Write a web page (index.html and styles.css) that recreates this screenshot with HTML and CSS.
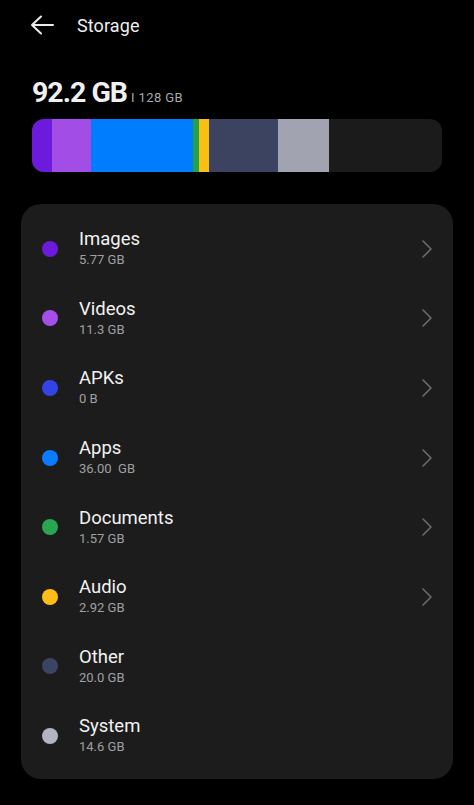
FILE: index.html
```html
<!DOCTYPE html>
<html lang="en">
<head>
<meta charset="utf-8">
<title>Storage</title>
<link rel="stylesheet" href="styles.css">
</head>
<body>
<div class="screen">
  <header class="topbar">
    <svg class="back" width="24" height="20" viewBox="0 0 24 20" aria-hidden="true">
      <path d="M23 10H2M11 1.5L2 10l9 8.5" fill="none" stroke="#ececec" stroke-width="2" stroke-linecap="round" stroke-linejoin="round"/>
    </svg>
    <h1 class="title">Storage</h1>
  </header>

  <div class="summary">
    <span class="used">92.2 GB</span>
    <span class="total">I 128 GB</span>
  </div>

  <div class="bar">
    <span class="seg" style="width:20px;background:#6c1bdc"></span>
    <span class="seg" style="width:39px;background:#a24de6"></span>
    <span class="seg" style="width:102px;background:#007cff"></span>
    <span class="seg" style="width:6px;background:#23a14b"></span>
    <span class="seg" style="width:10px;background:#fbbf14"></span>
    <span class="seg" style="width:69px;background:#3b4360"></span>
    <span class="seg" style="width:51px;background:#a1a4b0"></span>
  </div>

  <div class="card">
    <div class="row">
      <span class="dot" style="background:#6c1bdc"></span>
      <div class="text"><div class="name">Images</div><div class="size">5.77 GB</div></div>
      <svg class="chev" width="12" height="20" viewBox="0 0 12 20"><path d="M2 2l8 8-8 8" fill="none" stroke="#6c6c6c" stroke-width="1.6" stroke-linecap="round" stroke-linejoin="round"/></svg>
    </div>
    <div class="row">
      <span class="dot" style="background:#a54fe8"></span>
      <div class="text"><div class="name">Videos</div><div class="size">11.3 GB</div></div>
      <svg class="chev" width="12" height="20" viewBox="0 0 12 20"><path d="M2 2l8 8-8 8" fill="none" stroke="#6c6c6c" stroke-width="1.6" stroke-linecap="round" stroke-linejoin="round"/></svg>
    </div>
    <div class="row">
      <span class="dot" style="background:#3443e6"></span>
      <div class="text"><div class="name">APKs</div><div class="size">0 B</div></div>
      <svg class="chev" width="12" height="20" viewBox="0 0 12 20"><path d="M2 2l8 8-8 8" fill="none" stroke="#6c6c6c" stroke-width="1.6" stroke-linecap="round" stroke-linejoin="round"/></svg>
    </div>
    <div class="row">
      <span class="dot" style="background:#0a7cff"></span>
      <div class="text"><div class="name">Apps</div><div class="size">36.00&nbsp; GB</div></div>
      <svg class="chev" width="12" height="20" viewBox="0 0 12 20"><path d="M2 2l8 8-8 8" fill="none" stroke="#6c6c6c" stroke-width="1.6" stroke-linecap="round" stroke-linejoin="round"/></svg>
    </div>
    <div class="row">
      <span class="dot" style="background:#28a652"></span>
      <div class="text"><div class="name">Documents</div><div class="size">1.57 GB</div></div>
      <svg class="chev" width="12" height="20" viewBox="0 0 12 20"><path d="M2 2l8 8-8 8" fill="none" stroke="#6c6c6c" stroke-width="1.6" stroke-linecap="round" stroke-linejoin="round"/></svg>
    </div>
    <div class="row">
      <span class="dot" style="background:#fbbd16"></span>
      <div class="text"><div class="name">Audio</div><div class="size">2.92 GB</div></div>
      <svg class="chev" width="12" height="20" viewBox="0 0 12 20"><path d="M2 2l8 8-8 8" fill="none" stroke="#6c6c6c" stroke-width="1.6" stroke-linecap="round" stroke-linejoin="round"/></svg>
    </div>
    <div class="row">
      <span class="dot" style="background:#3a4463"></span>
      <div class="text"><div class="name">Other</div><div class="size">20.0 GB</div></div>
    </div>
    <div class="row">
      <span class="dot" style="background:#b3b4c3"></span>
      <div class="text"><div class="name">System</div><div class="size">14.6 GB</div></div>
    </div>
  </div>
</div>
</body>
</html>
```

FILE: styles.css
```css
html, body {
  margin: 0;
  padding: 0;
  background: #000;
}

.screen {
  width: 474px;
  height: 805px;
  background: #000;
  font-family: Roboto, "Noto Sans", "Liberation Sans", sans-serif;
  color: #f0f0f0;
  overflow: hidden;
}

.topbar {
  display: flex;
  align-items: center;
  height: 50px;
  padding-left: 30px;
}

.back {
  display: block;
}

.title {
  margin: 0 0 0 23px;
  font-size: 18px;
  font-weight: 400;
  color: #ededed;
  letter-spacing: 0.1px;
}

.summary {
  display: flex;
  align-items: baseline;
  gap: 4px;
  padding: 26px 0 0 32px;
  height: 33px;
}

.used {
  font-size: 28.5px;
  font-weight: 700;
  color: #f0f0f0;
  letter-spacing: -1px;
  line-height: 33px;
}

.total {
  font-size: 13px;
  color: #a8a8a8;
  letter-spacing: 0.4px;
}

.bar {
  display: flex;
  width: 410px;
  height: 53px;
  margin: 10px 0 0 32px;
  border-radius: 12px;
  background: #1b1b1b;
  overflow: hidden;
}

.seg {
  display: block;
  height: 100%;
  flex: none;
}

.card {
  width: 432px;
  margin: 32px 0 0 21px;
  padding: 10px 0 8px;
  background: #1c1c1c;
  border-radius: 20px;
  box-sizing: border-box;
}

.row {
  display: flex;
  align-items: center;
  height: 69.6px;
  padding: 0 20px 0 21px;
}

.dot {
  width: 16px;
  height: 16px;
  border-radius: 50%;
  flex: none;
}

.text {
  flex: 1;
  margin-left: 21px;
}

.name {
  font-size: 18.5px;
  line-height: 22px;
  color: #f2f2f2;
}

.size {
  font-size: 13px;
  line-height: 18px;
  color: #a0a0a0;
  margin-top: 1px;
}

.chev {
  display: block;
  flex: none;
}
```
